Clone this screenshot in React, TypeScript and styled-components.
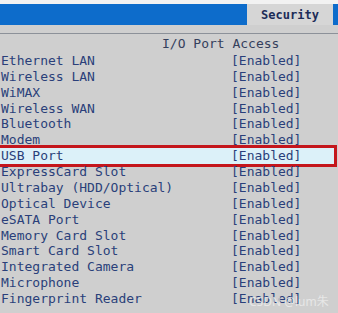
import React from "react";
import styled, { createGlobalStyle } from "styled-components";

const ports = [
  "Ethernet LAN",
  "Wireless LAN",
  "WiMAX",
  "Wireless WAN",
  "Bluetooth",
  "Modem",
  "USB Port",
  "ExpressCard Slot",
  "Ultrabay (HDD/Optical)",
  "Optical Device",
  "eSATA Port",
  "Memory Card Slot",
  "Smart Card Slot",
  "Integrated Camera",
  "Microphone",
  "Fingerprint Reader",
];

const GlobalStyle = createGlobalStyle`
  html, body {
    margin: 0;
    padding: 0;
    background: #cfcfcf;
  }
  body {
    font-family: "DejaVu Sans Mono", "Liberation Mono", monospace;
    overflow: hidden;
  }
`;

export default function App() {
  return (
    <>
      <GlobalStyle />
      <StScreen>
        <StHeader>
          <StTab>Security</StTab>
        </StHeader>
        <StDivider />
        <StTitle>I/O Port Access</StTitle>
        <StList>
          {ports.map((name) => (
            <StRow key={name} $selected={name === "USB Port"}>
              <StLabel>{name}</StLabel>
              <StValue>[Enabled]</StValue>
            </StRow>
          ))}
        </StList>
        <StWatermark>CSDN @lum朱</StWatermark>
      </StScreen>
    </>
  );
}

const StScreen = styled.div`
  position: relative;
  width: 338px;
  height: 313px;
  background: #cfcfcf;
  overflow: hidden;
  border-top: 4px solid #f2f2f2;
  box-sizing: border-box;
`;

const StHeader = styled.div`
  height: 21px;
  display: flex;
  justify-content: flex-end;
  padding-right: 5px;
  background: #0d6ccb;
`;

const StTab = styled.div`
  width: 86px;
  display: flex;
  align-items: center;
  justify-content: center;
  background: #d6d6d6;
  color: #1c2c58;
  font-size: 12px;
  font-weight: bold;
`;

const StDivider = styled.div`
  margin-top: 8px;
  height: 1px;
  background: #8c9199;
`;

const StTitle = styled.div`
  margin-top: 2px;
  padding-left: 162px;
  font-size: 13px;
  line-height: 15.87px;
  color: #35405c;
`;

const StList = styled.div`
  margin-top: 1px;
  display: flex;
  flex-direction: column;
`;

const StRow = styled.div<{ $selected?: boolean }>`
  display: flex;
  width: 337px;
  margin-left: -3px;
  padding-left: 4px;
  box-sizing: border-box;
  font-size: 13px;
  line-height: 15.87px;
  color: #2a3f7a;
  background: ${(p) => (p.$selected ? "#dcf1f9" : "transparent")};
  box-shadow: ${(p) => (p.$selected ? "0 0 0 3px #c4161c" : "none")};
`;

const StLabel = styled.span`
  width: 230px;
  white-space: nowrap;
`;

const StValue = styled.span`
  white-space: nowrap;
`;

const StWatermark = styled.div`
  position: absolute;
  left: 249px;
  top: 288px;
  font-family: "Noto Sans", "Noto Sans CJK SC", sans-serif;
  font-size: 12px;
  color: rgba(236, 236, 236, 0.85);
  white-space: nowrap;
`;
